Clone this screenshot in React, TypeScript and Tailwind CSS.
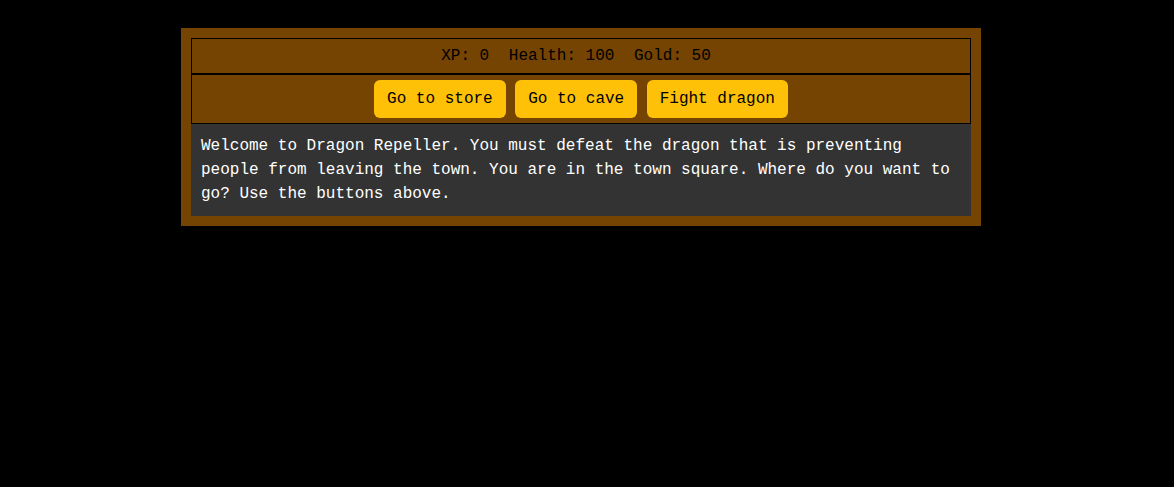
import React from "react";

export default function App() {
  const mono = { fontFamily: '"Liberation Mono", "Courier New", monospace' };
  return (
    <div className="min-h-screen w-full bg-black pt-[28px]" style={mono}>
      <div className="w-[1162px] flex justify-center">
        <div className="w-[800px] bg-[#754403] p-[10px] text-[16px]">
          <div className="h-[36px] border border-black flex items-center justify-center text-black leading-[18px]">
            <span className="pr-[10px]">XP: 0</span>
            <span className="w-[9.6px]" />
            <span className="pr-[10px]">Health: 100</span>
            <span className="w-[9.6px]" />
            <span className="pr-[10px]">Gold: 50</span>
          </div>
          <div className="h-[50px] border border-black flex items-center justify-center gap-[9.5px]">
            <button className="h-[38px] px-[13px] rounded-[6px] bg-[#ffc107] text-black leading-[18px]">Go to store</button>
            <button className="h-[38px] px-[13px] rounded-[6px] bg-[#ffc107] text-black leading-[18px]">Go to cave</button>
            <button className="h-[38px] px-[13px] rounded-[6px] bg-[#ffc107] text-black leading-[18px]">Fight dragon</button>
          </div>
          <div className="bg-[#333333] text-white p-[10px] leading-[24px]">
            Welcome to Dragon Repeller. You must defeat the dragon that is preventing people from leaving the town. You are in the town square. Where do you want to go? Use the buttons above.
          </div>
        </div>
      </div>
    </div>
  );
}
